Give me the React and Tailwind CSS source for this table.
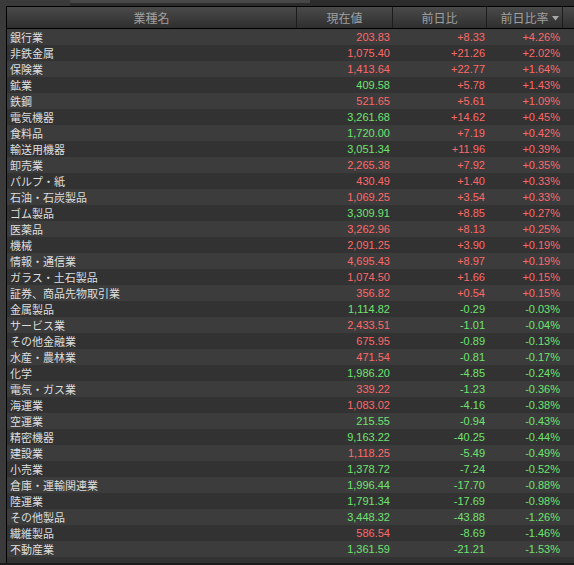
const ROWS = [
  ['銀行業', '203.83', 'r', '+8.33', '+4.26%'],
  ['非鉄金属', '1,075.40', 'r', '+21.26', '+2.02%'],
  ['保険業', '1,413.64', 'r', '+22.77', '+1.64%'],
  ['鉱業', '409.58', 'g', '+5.78', '+1.43%'],
  ['鉄鋼', '521.65', 'r', '+5.61', '+1.09%'],
  ['電気機器', '3,261.68', 'g', '+14.62', '+0.45%'],
  ['食料品', '1,720.00', 'g', '+7.19', '+0.42%'],
  ['輸送用機器', '3,051.34', 'g', '+11.96', '+0.39%'],
  ['卸売業', '2,265.38', 'r', '+7.92', '+0.35%'],
  ['パルプ・紙', '430.49', 'r', '+1.40', '+0.33%'],
  ['石油・石炭製品', '1,069.25', 'r', '+3.54', '+0.33%'],
  ['ゴム製品', '3,309.91', 'g', '+8.85', '+0.27%'],
  ['医薬品', '3,262.96', 'r', '+8.13', '+0.25%'],
  ['機械', '2,091.25', 'r', '+3.90', '+0.19%'],
  ['情報・通信業', '4,695.43', 'r', '+8.97', '+0.19%'],
  ['ガラス・土石製品', '1,074.50', 'r', '+1.66', '+0.15%'],
  ['証券、商品先物取引業', '356.82', 'r', '+0.54', '+0.15%'],
  ['金属製品', '1,114.82', 'g', '-0.29', '-0.03%'],
  ['サービス業', '2,433.51', 'r', '-1.01', '-0.04%'],
  ['その他金融業', '675.95', 'r', '-0.89', '-0.13%'],
  ['水産・農林業', '471.54', 'r', '-0.81', '-0.17%'],
  ['化学', '1,986.20', 'g', '-4.85', '-0.24%'],
  ['電気・ガス業', '339.22', 'r', '-1.23', '-0.36%'],
  ['海運業', '1,083.02', 'r', '-4.16', '-0.38%'],
  ['空運業', '215.55', 'g', '-0.94', '-0.43%'],
  ['精密機器', '9,163.22', 'g', '-40.25', '-0.44%'],
  ['建設業', '1,118.25', 'r', '-5.49', '-0.49%'],
  ['小売業', '1,378.72', 'g', '-7.24', '-0.52%'],
  ['倉庫・運輸関連業', '1,996.44', 'g', '-17.70', '-0.88%'],
  ['陸運業', '1,791.34', 'g', '-17.69', '-0.98%'],
  ['その他製品', '3,448.32', 'g', '-43.88', '-1.26%'],
  ['繊維製品', '586.54', 'r', '-8.69', '-1.46%'],
  ['不動産業', '1,361.59', 'g', '-21.21', '-1.53%'],
]

const RED = 'text-[#ff6868]'
const GREEN = 'text-[#6fe36f]'
const GRID = 'grid grid-cols-[290px_96px_94px_76px_1fr]'

function HeadCell({ children, last }) {
  return (
    <div className={`relative flex items-center justify-center pt-[2px] ${last ? '' : 'border-r border-[#1c1c1c]'}`}>
      {children}
    </div>
  )
}

export default function App() {
  return (
    <div
      className="w-[574px] h-[565px] overflow-hidden bg-[#3a3a3a] text-[11px]"
      style={{ fontFamily: '"Liberation Sans", "Noto Sans CJK JP", sans-serif' }}
    >
      {/* top strip */}
      <div className="h-[6px] flex bg-[#2c2c2c]">
        <div className="w-[70px] bg-[#3a3a3a]" />
        <div className="w-[240px] h-[3px] bg-[#474747]" />
      </div>

      <div className="ml-[6px] border-l border-t border-black">
        {/* header */}
        <div className={`${GRID} h-[22px] border-b border-black bg-gradient-to-b from-[#4a4a4a] to-[#2f2f2f] text-[#a0a0a0] text-[12px]`}>
          <HeadCell>業種名</HeadCell>
          <HeadCell>現在値</HeadCell>
          <HeadCell>前日比</HeadCell>
          <HeadCell>
            前日比率
            <svg className="absolute right-[3px] top-[9px]" width="7" height="5" viewBox="0 0 7 5">
              <path d="M0 0h7L3.5 4.5z" fill="#a8a8a8" />
            </svg>
          </HeadCell>
          <HeadCell last />
        </div>

        {/* rows */}
        {ROWS.map(([name, value, vc, chg, pct], i) => {
          const up = chg.startsWith('+')
          return (
            <div
              key={name}
              className={`${GRID} h-[16px] leading-[16px] ${i % 2 === 0 ? 'bg-[#3c3c3c]' : 'bg-[#323232]'}`}
            >
              <div className="pl-[3px] text-[#dedede]" style={{ fontFamily: '"Noto Sans CJK JP", sans-serif' }}>{name}</div>
              <div className={`text-right pr-[3px] ${vc === 'r' ? RED : GREEN}`}>{value}</div>
              <div className={`text-right pr-[2px] ${up ? RED : GREEN}`}>{chg}</div>
              <div className={`text-right pr-[3px] ${up ? RED : GREEN}`}>{pct}</div>
              <div />
            </div>
          )
        })}
        <div className="h-[6px] bg-[#323232]" />
      </div>
      <div className="h-[2px] bg-[#1c1c1c]" />
    </div>
  )
}
